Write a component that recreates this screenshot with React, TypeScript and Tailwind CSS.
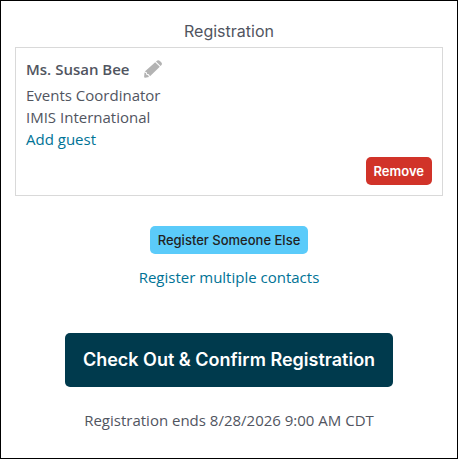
import React from "react";

const PencilIcon: React.FC = () => {
  return (
    <svg width="18" height="18" viewBox="0 0 18 18" fill="#b3b3b3" aria-hidden="true">
      <path d="M11.2 2.2 15.8 6.8 6 16.2 4.9 14.2 3.2 13.9 2.7 12.2 0.8 11.6z" />
      <path d="M0.5 12.5 1.9 13 2.4 14.8 4.1 15.2 5 16.9 1.2 17.7Q0.1 17.8 0.1 16.7z" />
      <path d="M12 1.5 13.3 0.6Q14.6-0.2 15.9 0.9L17.2 2.2Q18.5 3.6 17.5 5.1L16.6 6.1z" />
    </svg>
  );
};

const App: React.FC = () => {
  return (
    <main className="min-h-screen bg-white border border-black px-3.5 pt-4.5 pb-6 font-['Open_Sans',sans-serif] text-[15px] leading-[22px] text-[#51555f]">
      <h1 className="text-center text-base leading-6 font-['Inter',sans-serif] mb-1">
        Registration
      </h1>

      <section className="border border-[#d9d9d9] p-2.5">
        <div className="flex items-center gap-3.5 mb-1">
          <h2 className="font-semibold">Ms. Susan Bee</h2>
          <button type="button" aria-label="Edit registrant">
            <PencilIcon />
          </button>
        </div>
        <p>Events Coordinator</p>
        <p>IMIS International</p>
        <a href="#guest" className="block w-fit text-[#007396] hover:underline">
          Add guest
        </a>
        <div className="flex justify-end mt-[7px]">
          <button
            type="button"
            className="bg-[#d13329] text-white rounded-[5px] px-2 h-7 text-[13px] font-semibold font-['Inter',sans-serif]"
          >
            Remove
          </button>
        </div>
      </section>

      <div className="flex flex-col items-center mt-7.5">
        <button
          type="button"
          className="bg-[#5bcbfa] text-[#222222] rounded-[5px] px-2 h-7 text-[13px] font-medium font-['Inter',sans-serif]"
        >
          Register Someone Else
        </button>
        <a href="#contacts" className="mt-3 text-[#007396] hover:underline">
          Register multiple contacts
        </a>
        <button
          type="button"
          className="mt-[45px] bg-[#003a4d] text-white rounded-[5px] px-[18px] h-13.5 text-lg font-semibold font-['Inter',sans-serif]"
        >
          Check Out &amp; Confirm Registration
        </button>
        <p className="mt-[22px]">Registration ends 8/28/2026 9:00 AM CDT</p>
      </div>
    </main>
  );
};

export default App;
